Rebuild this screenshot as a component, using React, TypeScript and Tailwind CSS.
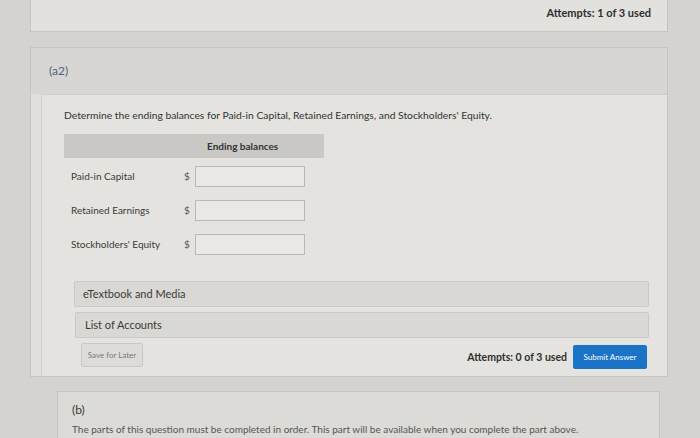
import React from 'react'

const rows = ['Paid-in Capital', 'Retained Earnings', "Stockholders' Equity"]

export default function App() {
  return (
    <div className="h-[438px] w-[700px] overflow-hidden bg-[#d4d3cf] font-['Lato','Open_Sans',sans-serif] text-[#3c3c3c]">
      {/* top attempts strip */}
      <div className="ml-[30px] flex h-[32px] w-[638px] items-start justify-end border border-t-0 border-[#c6c5c1] bg-[#e2e1dd] pr-[16px] pt-[5px]">
        <span className="text-[11px] font-bold text-[#2f2f2f]">Attempts: 1 of 3 used</span>
      </div>

      {/* part a2 */}
      <div className="ml-[30px] mt-[15px] w-[638px] border border-[#c6c5c1] bg-[#e0dfdb]">
        <div className="flex h-[46px] items-center bg-[#d7d6d2] pl-[18px]">
          <span className="text-[12px] text-[#4f6388]">(a2)</span>
        </div>
        <div className="ml-[10px] border-l border-t border-[#cfcecb] bg-[#e4e3df] pb-[7px] pl-[22px] pr-[20px] pt-[13px]">
          <p className="text-[10.3px] text-[#333]">Determine the ending balances for Paid-in Capital, Retained Earnings, and Stockholders' Equity.</p>

          <div className="mt-[11px] w-[260px]">
            <div className="flex h-[24px] items-center bg-[#c9c8c4]">
              <span className="ml-[143px] text-[10px] font-bold text-[#333]">Ending balances</span>
            </div>
            <div className="mt-[8px] flex flex-col gap-[13px]">
              {rows.map((r) => (
                <div key={r} className="flex h-[21px] items-center">
                  <span className="w-[120px] pl-[7px] text-[10px] text-[#3a3a3a]">{r}</span>
                  <span className="w-[11px] text-[10px] text-[#555]">$</span>
                  <div className="h-[21px] w-[110px] border border-[#b9b8b4] bg-[#e9e8e4]" />
                </div>
              ))}
            </div>
          </div>

          <div className="ml-[10px] mt-[26px] flex h-[26px] w-[575px] items-center rounded-[2px] border border-[#cac9c5] bg-[#d9d8d4] pl-[8px]">
            <span className="text-[11px] text-[#3a3a3a]">eTextbook and Media</span>
          </div>
          <div className="ml-[11px] mt-[5px] flex h-[26px] w-[574px] items-center rounded-[2px] border border-[#cac9c5] bg-[#d9d8d4] pl-[9px]">
            <span className="text-[11px] text-[#3a3a3a]">List of Accounts</span>
          </div>

          <div className="ml-[17px] mt-[5px] flex w-[566px] items-start justify-between">
            <button className="h-[24px] w-[62px] rounded-[2px] border border-[#c9c8c4] bg-[#dddcd8] text-[8px] text-[#7a7a7a]">
              Save for Later
            </button>
            <div className="flex items-center gap-[6px] pt-[2px]">
              <span className="text-[10.5px] font-bold text-[#2f2f2f]">Attempts: 0 of 3 used</span>
              <button className="h-[24px] w-[74px] rounded-[2px] bg-[#1b73c7] text-[8px] text-white">Submit Answer</button>
            </div>
          </div>
        </div>
      </div>

      {/* part b */}
      <div className="ml-[57px] mt-[14px] h-[60px] w-[603px] border border-[#c6c5c1] bg-[#dcdbd7] pl-[14px] pt-[9px]">
        <p className="text-[12px] text-[#3a3a3a]">(b)</p>
        <p className="mt-[3px] text-[10px] text-[#555]">
          The parts of this question must be completed in order. This part will be available when you complete the part above.
        </p>
      </div>
    </div>
  )
}
